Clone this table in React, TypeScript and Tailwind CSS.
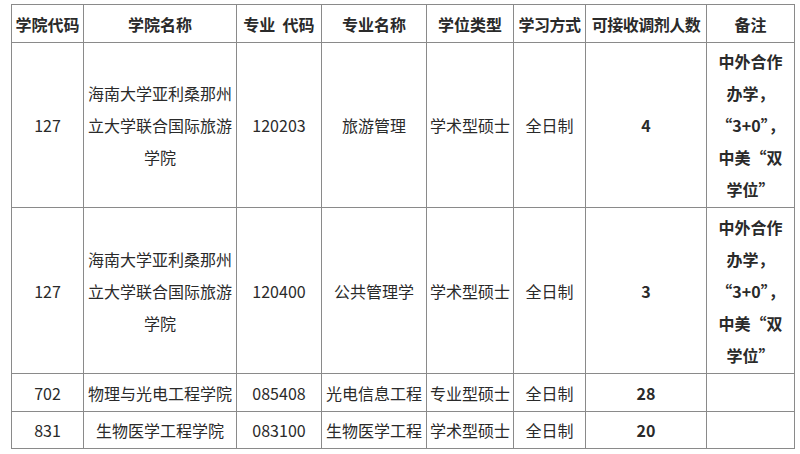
import React from "react";

const font = { fontFamily: '"Noto Sans CJK SC", "Noto Sans", sans-serif' };

const remark = (
  <>
    <div>中外合作</div>
    <div>办学，</div>
    <div>“3+0”，</div>
    <div>中美“双</div>
    <div>学位”</div>
  </>
);

const college = (
  <>
    <div>海南大学亚利桑那州</div>
    <div>立大学联合国际旅游</div>
    <div>学院</div>
  </>
);

export default function App() {
  const td = "border border-[#8a8a8a] text-center align-middle p-0";
  return (
    <div className="w-[800px] h-[454px] bg-white pt-[4px] pl-[11px] text-[#2a2a2a] text-[16px]" style={font}>
      <table className="table-fixed border-collapse w-[783px]">
        <colgroup>
          <col className="w-[72px]" />
          <col className="w-[153px]" />
          <col className="w-[85px]" />
          <col className="w-[105px]" />
          <col className="w-[87px]" />
          <col className="w-[72px]" />
          <col className="w-[121px]" />
          <col className="w-[88px]" />
        </colgroup>
        <tbody>
          <tr className="h-[38px] font-bold">
            <td className={td}>学院代码</td>
            <td className={td}>学院名称</td>
            <td className={`${td} whitespace-pre`}>专业  代码</td>
            <td className={td}>专业名称</td>
            <td className={td}>学位类型</td>
            <td className={`${td} whitespace-nowrap tracking-[-0.5px]`}>学习方式</td>
            <td className={`${td} whitespace-nowrap tracking-[-0.5px]`}>可接收调剂人数</td>
            <td className={td}>备注</td>
          </tr>
          <tr className="h-[165px]">
            <td className={td}>127</td>
            <td className={`${td} leading-[32px] whitespace-nowrap`}>{college}</td>
            <td className={td}>120203</td>
            <td className={td}>旅游管理</td>
            <td className={td}>学术型硕士</td>
            <td className={td}>全日制</td>
            <td className={`${td} font-bold`}>4</td>
            <td className={`${td} font-bold leading-[32px] whitespace-nowrap`}>{remark}</td>
          </tr>
          <tr className="h-[166px]">
            <td className={td}>127</td>
            <td className={`${td} leading-[32px] whitespace-nowrap`}>{college}</td>
            <td className={td}>120400</td>
            <td className={td}>公共管理学</td>
            <td className={td}>学术型硕士</td>
            <td className={td}>全日制</td>
            <td className={`${td} font-bold`}>3</td>
            <td className={`${td} font-bold leading-[32px] whitespace-nowrap`}>{remark}</td>
          </tr>
          <tr className="h-[38px]">
            <td className={td}>702</td>
            <td className={`${td} whitespace-nowrap`}>物理与光电工程学院</td>
            <td className={td}>085408</td>
            <td className={`${td} whitespace-nowrap`}>光电信息工程</td>
            <td className={`${td} whitespace-nowrap`}>专业型硕士</td>
            <td className={td}>全日制</td>
            <td className={`${td} font-bold`}>28</td>
            <td className={td}></td>
          </tr>
          <tr className="h-[37px]">
            <td className={td}>831</td>
            <td className={`${td} whitespace-nowrap`}>生物医学工程学院</td>
            <td className={td}>083100</td>
            <td className={`${td} whitespace-nowrap`}>生物医学工程</td>
            <td className={`${td} whitespace-nowrap`}>学术型硕士</td>
            <td className={td}>全日制</td>
            <td className={`${td} font-bold`}>20</td>
            <td className={td}></td>
          </tr>
        </tbody>
      </table>
    </div>
  );
}
